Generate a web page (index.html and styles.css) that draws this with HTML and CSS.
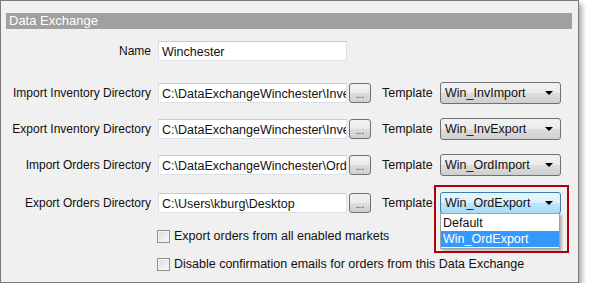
FILE: index.html
```html
<!DOCTYPE html>
<html lang="en">
<head>
    <meta charset="UTF-8">
    <title>Data Exchange</title>
    <link rel="stylesheet" href="styles.css">
</head>
<body>
    <div class="panel">
        <div class="panel-title">Data Exchange</div>

        <div class="row row-name">
            <label class="field-label">Name</label>
            <div class="text-input">Winchester</div>
        </div>

        <div class="row row-first">
            <label class="field-label">Import Inventory Directory</label>
            <div class="text-input">C:\DataExchangeWinchester\Inve</div>
            <button class="browse">...</button>
            <span class="template-label">Template</span>
            <div class="select">Win_InvImport<span class="arrow"></span></div>
        </div>

        <div class="row">
            <label class="field-label">Export Inventory Directory</label>
            <div class="text-input">C:\DataExchangeWinchester\Inve</div>
            <button class="browse">...</button>
            <span class="template-label">Template</span>
            <div class="select">Win_InvExport<span class="arrow"></span></div>
        </div>

        <div class="row">
            <label class="field-label">Import Orders Directory</label>
            <div class="text-input">C:\DataExchangeWinchester\Ord</div>
            <button class="browse">...</button>
            <span class="template-label">Template</span>
            <div class="select">Win_OrdImport<span class="arrow"></span></div>
        </div>

        <div class="row row-last">
            <label class="field-label">Export Orders Directory</label>
            <div class="text-input">C:\Users\kburg\Desktop</div>
            <button class="browse">...</button>
            <span class="template-label">Template</span>
            <div class="select-wrap">
                <div class="select open">Win_OrdExport<span class="arrow"></span></div>
                <ul class="dropdown">
                    <li>Default</li>
                    <li class="selected">Win_OrdExport</li>
                </ul>
                <div class="callout"></div>
            </div>
        </div>

        <div class="check-row check-first">
            <span class="checkbox"></span>
            <span>Export orders from all enabled markets</span>
        </div>
        <div class="check-row">
            <span class="checkbox"></span>
            <span>Disable confirmation emails for orders from this Data Exchange</span>
        </div>
    </div>
</body>
</html>
```

FILE: styles.css
```css
body {
    margin: 0;
    background-color: #fff;
    font-family: "Liberation Sans", Arial, sans-serif;
    font-size: 12px;
    color: #111;
}

.panel {
    width: 579px;
    height: 283px;
    border: 1px solid #7a7a7a;
    background-color: #f0f0f0;
    box-shadow: 3px 4px 5px rgba(0, 0, 0, 0.35);
    padding: 12px 6px 0 5px;
    box-sizing: border-box;
}

.panel-title {
    background-color: #a0a0a0;
    color: #fff;
    height: 16px;
    line-height: 16px;
    padding-left: 3px;
    font-size: 13px;
}

.row {
    display: flex;
    align-items: center;
    height: 22px;
    margin-top: 14px;
}

.row-name {
    margin-top: 11px;
}

.row-first {
    margin-top: 20px;
}

.row-last {
    margin-top: 16px;
}

.field-label {
    width: 145px;
    text-align: right;
    flex-shrink: 0;
}

.text-input {
    margin-left: 7px;
    width: 189px;
    height: 20px;
    line-height: 20px;
    background-color: #fff;
    border: 1px solid #dbdfe6;
    border-top-color: #c8ccd4;
    padding-left: 3px;
    box-sizing: border-box;
    white-space: nowrap;
    overflow: hidden;
    flex-shrink: 0;
    font-size: 12.5px;
}

.browse {
    margin-left: 2px;
    width: 22px;
    height: 20px;
    padding: 0;
    border: 1px solid #707070;
    border-radius: 3px;
    background: linear-gradient(#f2f2f2, #ebebeb 50%, #dddddd 51%, #cfcfcf);
    font-family: inherit;
    font-size: 10px;
    line-height: 22px;
    color: #333;
    flex-shrink: 0;
}

.template-label {
    margin-left: 11px;
    width: 58px;
    flex-shrink: 0;
    font-size: 12.5px;
}

.select, .select-wrap {
    width: 121px;
    height: 22px;
    flex-shrink: 0;
}

.select {
    position: relative;
    box-sizing: border-box;
    border: 1px solid #707070;
    border-radius: 3px;
    background: linear-gradient(#f2f2f2, #ebebeb 50%, #dddddd 51%, #cfcfcf);
    padding-left: 4px;
    line-height: 20px;
    font-size: 12.5px;
}

.select.open {
    border-color: #3c7fb1;
    background: linear-gradient(#eaf6fd, #d9f0fc 50%, #bee6fd 51%, #a7d9f5);
}

.arrow {
    position: absolute;
    right: 7px;
    top: 8px;
    border-left: 4px solid transparent;
    border-right: 4px solid transparent;
    border-top: 4px solid #000;
}

.select-wrap {
    position: relative;
}

.dropdown {
    position: absolute;
    left: 0;
    top: 21px;
    width: 120px;
    margin: 0;
    padding: 1px 0;
    list-style: none;
    background-color: #fff;
    border: 1px solid #a0a0a0;
    box-sizing: border-box;
    box-shadow: 2px 2px 2px rgba(0, 0, 0, 0.25);
    font-size: 12.5px;
}

.dropdown li {
    height: 16px;
    line-height: 16px;
    padding-left: 2px;
}

.dropdown .selected {
    background-color: #3399ff;
    color: #fff;
}

.callout {
    position: absolute;
    left: -6px;
    top: -7px;
    width: 135px;
    height: 68px;
    border: 2px solid #b0000b;
    box-sizing: border-box;
}

.check-row {
    display: flex;
    align-items: center;
    gap: 4px;
    margin-left: 151px;
    margin-top: 14px;
    font-size: 12.5px;
}

.check-first {
    margin-top: 15px;
}

.checkbox {
    width: 11px;
    height: 11px;
    border: 1px solid #8f8f8f;
    background: linear-gradient(135deg, #dcdcdc, #f8f8f8);
    box-shadow: inset 0 0 0 1px #f4f4f4;
}
```
